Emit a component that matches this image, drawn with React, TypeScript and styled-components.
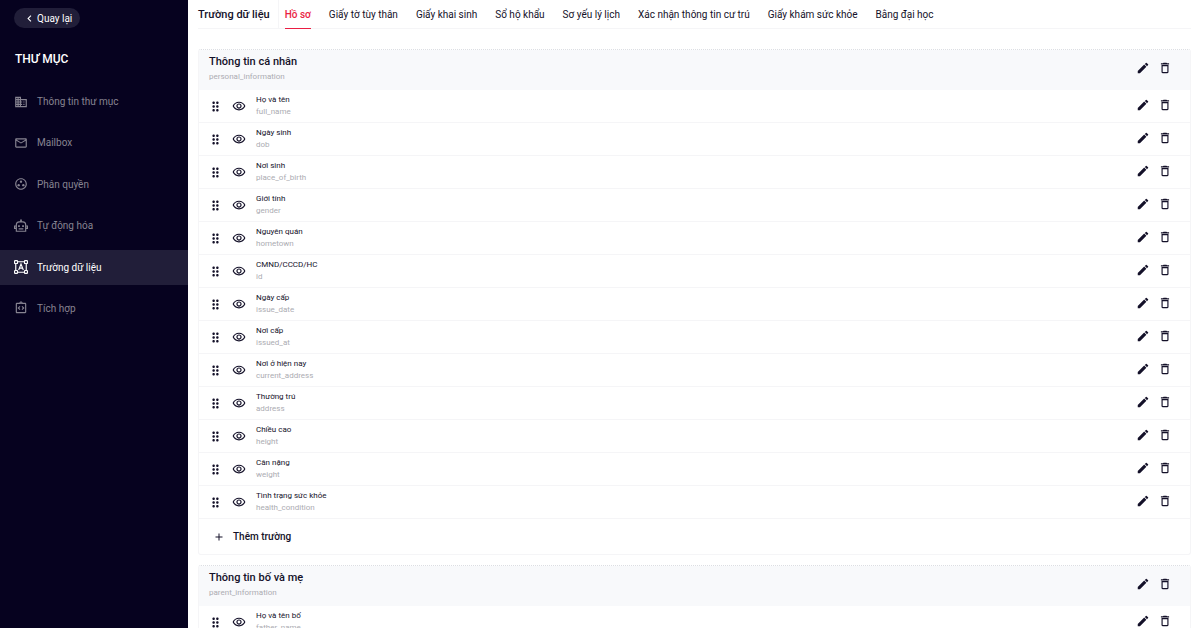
import React from 'react';
import styled, { createGlobalStyle } from 'styled-components';
import {
  MdChevronLeft, MdOutlineDomain, MdMailOutline, MdOutlineGroupWork,
  MdOutlineIntegrationInstructions, MdEdit, MdDeleteOutline, MdDragIndicator,
  MdOutlineRemoveRedEye, MdAdd,
} from 'react-icons/md';

const ink = '#141129';
const line = '#f5f5f7';

const GlobalStyle = createGlobalStyle`
  *, *::before, *::after { box-sizing: border-box; }
  body {
    margin: 0;
    height: 100vh;
    overflow: hidden;
    background: #ffffff;
    color: ${ink};
    font-family: Roboto, "Liberation Sans", sans-serif;
    font-size: 10px;
  }
  button { border: 0; padding: 0; background: none; font: inherit; color: inherit; cursor: pointer; }
  a { color: inherit; text-decoration: none; }
  h1, h2, p, ul { margin: 0; padding: 0; }
  ul { list-style: none; }
  svg { display: block; flex: none; }
`;

const Shell = styled.div`
  display: flex;
  height: 100vh;
  overflow: hidden;
`;

const Sidebar = styled.aside`
  flex: none;
  width: 188px;
  padding-top: 8px;
  background: #06021f;
  color: #ffffff;
`;

const BackButton = styled.button`
  display: flex;
  align-items: center;
  gap: 1px;
  height: 20px;
  margin-left: 14px;
  padding: 0 8px 0 9px;
  border-radius: 10px;
  background: #211e39;
  color: #ffffff;
`;

const SidebarTitle = styled.h1`
  margin: 22px 0 16px;
  padding-left: 15px;
  font-size: 12px;
  line-height: 18px;
  font-weight: 500;
`;

const Menu = styled.ul`
  display: flex;
  flex-direction: column;
  justify-content: space-between;
  min-height: 242px;
`;

const MenuLink = styled.a<{ $active?: boolean }>`
  display: flex;
  align-items: center;
  gap: 9px;
  height: 35px;
  padding-left: 14px;
  background: ${(p) => (p.$active ? '#211e39' : 'transparent')};
  color: ${(p) => (p.$active ? '#ffffff' : '#878491')};
`;

const Main = styled.main`
  flex: 1;
  min-width: 0;
  padding: 0 9px 0 10px;
`;

const TopBar = styled.header`
  display: flex;
  align-items: stretch;
  height: 29px;
  margin-bottom: 20px;
  border-bottom: 1px solid ${line};
`;

const PageTitle = styled.h2`
  padding-right: 8px;
  border-right: 1px solid ${line};
  font-size: 11px;
  line-height: 29px;
  font-weight: 500;
  white-space: nowrap;
`;

const Tabs = styled.nav`
  display: flex;
  gap: 18px;
  padding-left: 6px;
`;

const Tab = styled.a<{ $active?: boolean }>`
  height: 29px;
  line-height: 29px;
  white-space: nowrap;
  color: ${(p) => (p.$active ? '#ea1e43' : ink)};
  font-weight: ${(p) => (p.$active ? 500 : 400)};
  border-bottom: 1px solid ${(p) => (p.$active ? '#ea1e43' : 'transparent')};
`;

const Card = styled.section`
  margin-bottom: 10px;
  border: 1px solid ${line};
  border-top: 1px dotted #dcdee3;
  border-radius: 3px;
  overflow: hidden;
`;

const CardHeader = styled.div`
  display: flex;
  align-items: center;
  height: 40px;
  padding: 0 18px 2px 10px;
  background: #f8f9fb;
`;

const Names = styled.div`
  flex: 1;
  min-width: 0;
`;

const CardTitle = styled.h2`
  font-size: 11px;
  line-height: 16px;
  font-weight: 500;
`;

const CardKey = styled.p`
  font-size: 8px;
  line-height: 14px;
  color: #acacb2;
`;

const Row = styled.li`
  display: flex;
  align-items: center;
  height: 33px;
  padding: 0 18px 0 9px;
  border-bottom: 1px solid ${line};
`;

const IconButton = styled.button`
  display: flex;
  align-items: center;
  justify-content: center;
  width: 14px;
  height: 14px;
`;

const Handles = styled.div`
  display: flex;
  gap: 10px;
  margin-right: 10px;
`;

const Actions = styled.div`
  display: flex;
  gap: 8px;
  padding-bottom: 3px;
`;

const FieldName = styled.p`
  font-size: 8px;
  line-height: 12px;
`;

const FieldKey = styled(FieldName)`
  color: #acacb2;
`;

const AddButton = styled.button`
  display: flex;
  align-items: center;
  gap: 8px;
  height: 35px;
  padding-left: 14px;
  font-weight: 500;
`;

const RobotIcon = () => (
  <svg width="14" height="14" viewBox="0 0 24 24" fill="none" stroke="currentColor" strokeWidth="2">
    <path d="M4 21V10a5 5 0 0 1 5-5h6a5 5 0 0 1 5 5v11z M4 12H1v4h3 M20 12h3v4h-3 M8 17h8" />
    <path d="M12 5V1 M7 12h3 M14 12h3" strokeWidth="3" />
  </svg>
);

const TextFrameIcon = () => (
  <svg width="14" height="14" viewBox="0 0 24 24" fill="none" stroke="currentColor" strokeWidth="2">
    <path d="M6 3h12 M6 21h12 M3 6v12 M21 6v12 M8 17l4-10 4 10 M9 14h6" />
    <rect x="1" y="1" width="5" height="5" rx="1" />
    <rect x="18" y="1" width="5" height="5" rx="1" />
    <rect x="1" y="18" width="5" height="5" rx="1" />
    <rect x="18" y="18" width="5" height="5" rx="1" />
  </svg>
);

const menu = [
  { label: 'Thông tin thư mục', icon: <MdOutlineDomain size={14} /> },
  { label: 'Mailbox', icon: <MdMailOutline size={14} /> },
  { label: 'Phân quyền', icon: <MdOutlineGroupWork size={14} /> },
  { label: 'Tự động hóa', icon: <RobotIcon /> },
  { label: 'Trường dữ liệu', icon: <TextFrameIcon />, active: true },
  { label: 'Tích hợp', icon: <MdOutlineIntegrationInstructions size={14} /> },
];

const tabs = ['Hồ sơ', 'Giấy tờ tùy thân', 'Giấy khai sinh', 'Sổ hộ khẩu', 'Sơ yếu lý lịch',
  'Xác nhận thông tin cư trú', 'Giấy khám sức khỏe', 'Bằng đại học'];

const groups = [
  {
    title: 'Thông tin cá nhân',
    id: 'personal_information',
    fields: [
      ['Họ và tên', 'full_name'], ['Ngày sinh', 'dob'], ['Nơi sinh', 'place_of_birth'],
      ['Giới tính', 'gender'], ['Nguyên quán', 'hometown'], ['CMND/CCCD/HC', 'id'],
      ['Ngày cấp', 'issue_date'], ['Nơi cấp', 'issued_at'], ['Nơi ở hiện nay', 'current_address'],
      ['Thường trú', 'address'], ['Chiều cao', 'height'], ['Cân nặng', 'weight'],
      ['Tình trạng sức khỏe', 'health_condition'],
    ],
  },
  { title: 'Thông tin bố và mẹ', id: 'parent_information', fields: [['Họ và tên bố', 'father_name']] },
];

const RowActions = ({ name }: { name: string }) => (
  <Actions>
    <IconButton aria-label={`Sửa ${name}`}><MdEdit size={14} /></IconButton>
    <IconButton aria-label={`Xóa ${name}`}><MdDeleteOutline size={14} /></IconButton>
  </Actions>
);

export default function App() {
  return (
    <>
      <GlobalStyle />
      <Shell>
        <Sidebar>
          <BackButton><MdChevronLeft size={13} />Quay lại</BackButton>
          <SidebarTitle>THƯ MỤC</SidebarTitle>
          <Menu>
            {menu.map((m) => (
              <li key={m.label}><MenuLink href="#" $active={m.active}>{m.icon}{m.label}</MenuLink></li>
            ))}
          </Menu>
        </Sidebar>
        <Main>
          <TopBar>
            <PageTitle>Trường dữ liệu</PageTitle>
            <Tabs>
              {tabs.map((t, i) => <Tab key={t} href="#" $active={i === 0}>{t}</Tab>)}
            </Tabs>
          </TopBar>
          {groups.map((g) => (
            <Card key={g.id}>
              <CardHeader>
                <Names><CardTitle>{g.title}</CardTitle><CardKey>{g.id}</CardKey></Names>
                <RowActions name={g.title} />
              </CardHeader>
              <ul>
                {g.fields.map(([name, key]) => (
                  <Row key={key}>
                    <Handles>
                      <IconButton aria-label={`Di chuyển ${name}`}><MdDragIndicator size={15} /></IconButton>
                      <IconButton aria-label={`Hiển thị ${name}`}><MdOutlineRemoveRedEye size={14} /></IconButton>
                    </Handles>
                    <Names><FieldName>{name}</FieldName><FieldKey>{key}</FieldKey></Names>
                    <RowActions name={name} />
                  </Row>
                ))}
              </ul>
              <AddButton><MdAdd size={12} />Thêm trường</AddButton>
            </Card>
          ))}
        </Main>
      </Shell>
    </>
  );
}
